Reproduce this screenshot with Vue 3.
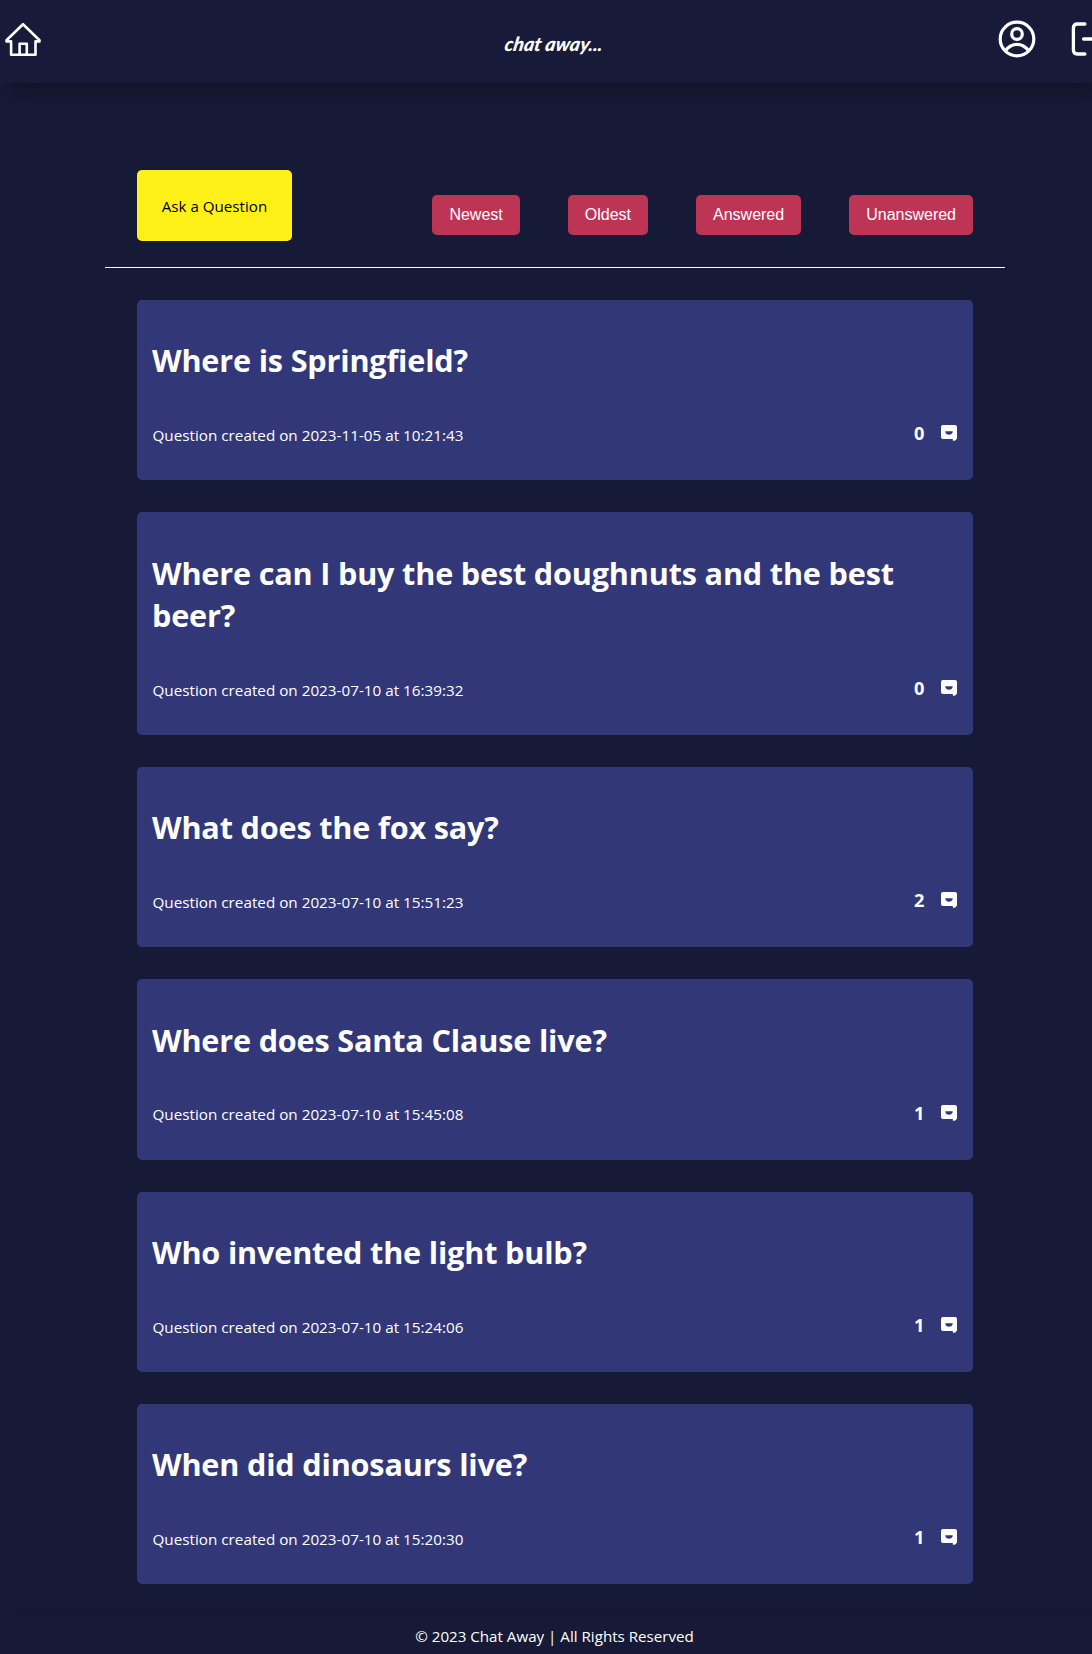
<script setup>
const filters = ['Newest', 'Oldest', 'Answered', 'Unanswered']
const questions = [
  { title: 'Where is Springfield?', date: '2023-11-05', time: '10:21:43', answers: 0 },
  { title: 'Where can I buy the best doughnuts and the best beer?', date: '2023-07-10', time: '16:39:32', answers: 0 },
  { title: 'What does the fox say?', date: '2023-07-10', time: '15:51:23', answers: 2 },
  { title: 'Where does Santa Clause live?', date: '2023-07-10', time: '15:45:08', answers: 1 },
  { title: 'Who invented the light bulb?', date: '2023-07-10', time: '15:24:06', answers: 1 },
  { title: 'When did dinosaurs live?', date: '2023-07-10', time: '15:20:30', answers: 1 },
]
</script>

<template>
  <div class="page">
    <header class="header">
      <svg class="home" viewBox="0 0 38 36" fill="none" stroke="#fff" stroke-width="2.6" stroke-linejoin="round" stroke-linecap="round">
        <path d="M19 2.2 35.5 18.3V19.4H31.5V32.8H7.1V19.4H2.5V18.3Z" />
        <path d="M15.6 32.5V21.8H22.8V32.5" />
      </svg>
      <div class="logo">chat away...</div>
      <nav class="actions">
        <svg class="user" viewBox="0 0 38 38" fill="none" stroke="#fff" stroke-width="3.2">
          <circle cx="19" cy="19" r="16.8" />
          <circle cx="19" cy="14" r="5.3" />
          <path d="M7.5 30.7C13.5 22.2 24.5 22.2 30.5 30.7" />
        </svg>
        <svg class="logout" viewBox="0 0 38 36" fill="none" stroke="#fff" stroke-width="3.3" stroke-linecap="round" stroke-linejoin="round">
          <path d="M13.9 3H6.4Q2.4 3 2.4 7V29Q2.4 33 6.4 33H13.9M12.6 18H35M28 11l7 7-7 7" />
        </svg>
      </nav>
    </header>

    <main class="main">
      <div class="toolbar">
        <button class="ask">Ask a Question</button>
        <div class="filters">
          <button v-for="f in filters" :key="f" class="filter">{{ f }}</button>
        </div>
      </div>

      <section class="list">
        <article v-for="q in questions" :key="q.time" class="card">
          <h1 class="title">{{ q.title }}</h1>
          <div class="meta">
            <span class="created">Question created on {{ q.date }} at {{ q.time }}</span>
            <span class="count">
              <b>{{ q.answers }}</b>
              <svg viewBox="0 0 16 16" fill="#fff">
                <path fill-rule="evenodd" d="M2 0H14Q16 0 16 2V13.5Q15 15.5 12.5 16Q11.5 15.5 11.8 14H2Q0 14 0 12V2Q0 0 2 0ZM4.8 6.3Q4 6.3 4.3 7.2Q5.3 9.8 8 9.8T11.7 7.2Q12 6.3 11.2 6.3Z" />
              </svg>
            </span>
          </div>
        </article>
      </section>
    </main>

    <footer class="footer">© 2023 Chat Away | All Rights Reserved</footer>
  </div>
</template>

<style>
body {
  margin: 0;
  background: #171a36;
}
</style>

<style scoped>
.page {
  display: flex;
  flex-direction: column;
  height: 1654px;
  overflow: hidden;
  background: #171a36;
  color: #fff;
  font-family: "Open Sans", "Noto Sans", sans-serif;
}
.header {
  display: grid;
  grid-template-columns: 1fr auto 1fr;
  align-items: center;
  flex: none;
  box-sizing: border-box;
  width: 1109px;
  height: 83px;
  background: #171a38;
  box-shadow: 0 16px 20px -10px #111222;
}
.home {
  width: 38px;
  height: 36px;
  margin: 0 0 4px 4px;
}
.logo {
  margin-top: 4px;
  font: italic 900 19.4px/26px Lato, sans-serif;
  transform: skewX(-10deg);
}
.actions {
  display: flex;
  align-items: center;
  justify-content: flex-end;
  gap: 35.5px;
  margin-bottom: 5px;
}
.user {
  width: 38px;
  height: 38px;
}
.logout {
  width: 38px;
  height: 36px;
}
.main {
  flex: none;
  box-sizing: border-box;
  width: 900px;
  height: 1534px;
  margin-left: 105px;
  padding-top: 87px;
}
.toolbar {
  display: flex;
  align-items: flex-start;
  justify-content: space-between;
  box-sizing: border-box;
  height: 98px;
  padding: 0 32px;
  border-bottom: 1px solid #fff;
}
button {
  border: 0;
  border-radius: 5px;
  white-space: nowrap;
}
.ask {
  width: 155px;
  height: 71px;
  padding: 0;
  background: #fff117;
  color: #000;
  font: 15.15px "Open Sans", sans-serif;
}
.filters {
  display: flex;
  gap: 48px;
  padding-top: 25px;
}
.filter {
  height: 40px;
  padding: 0 17px;
  background: #be3455;
  color: #fff;
  font: 16px "Liberation Sans", Arial, sans-serif;
}
.list {
  display: flex;
  flex-direction: column;
  gap: 32px;
  padding: 32px 32px 0;
}
.card {
  padding: 39.3px 16px 35px;
  border-radius: 5px;
  background: #323778;
}
.title {
  margin: 0 -1px 41.9px;
  font-size: 30.6px;
  font-weight: 700;
  line-height: 42.6px;
  letter-spacing: -0.17px;
}
.meta {
  display: flex;
  justify-content: space-between;
  height: 21.5px;
}
.created {
  margin-left: -0.5px;
  font-size: 15.25px;
  line-height: 22px;
}
.count {
  display: flex;
  align-items: center;
  gap: 16.5px;
  height: 18.6px;
}
.count b {
  font-size: 18.2px;
  line-height: 20px;
}
.count svg {
  width: 16px;
  height: 16px;
}
.footer {
  flex: none;
  width: 1109px;
  height: 37px;
  box-shadow: 0 -8px 12px -6px rgba(17, 24, 42, 0.5);
  font-size: 15.15px;
  line-height: 39px;
  text-align: center;
}
</style>
